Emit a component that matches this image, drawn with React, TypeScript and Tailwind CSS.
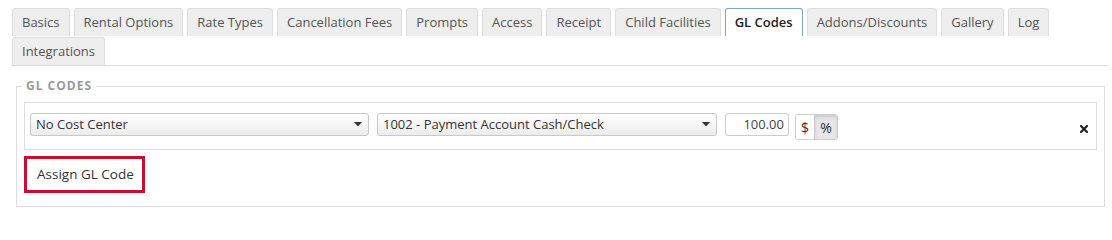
const tabs = [
  'Basics',
  'Rental Options',
  'Rate Types',
  'Cancellation Fees',
  'Prompts',
  'Access',
  'Receipt',
  'Child Facilities',
  'GL Codes',
  'Addons/Discounts',
  'Gallery',
  'Log',
  'Integrations',
];

function Caret() {
  return (
    <svg width="8" height="5" viewBox="0 0 8 5" className="shrink-0">
      <path d="M0 0h8L4 4.5z" fill="#333" />
    </svg>
  );
}

function FakeSelect({ label, width }: { label: string; width: string }) {
  return (
    <div className={`${width} h-[23px] flex items-center justify-between pl-[5px] pr-[6px] rounded-[3px] border border-[#c9c9c9] bg-linear-to-b from-white to-[#ececec] text-[13px] text-[#333]`}>
      <span className="truncate">{label}</span>
      <Caret />
    </div>
  );
}

export default function App() {
  const active = 'GL Codes';

  return (
    <div className="pt-2 pl-[11px] pr-[4px] bg-white font-['Open_Sans',sans-serif] text-[#333]">
      <ul className="flex flex-wrap gap-y-px border-b border-[#ddd] pl-[1px]">
        {tabs.map((t) => (
          <li key={t} className="mr-[4px]">
            <a
              className={
                t === active
                  ? 'h-[28px] flex items-center px-[9px] rounded-t-[3px] border border-b-0 border-[#7ea8cc] bg-white text-[13px] font-semibold text-[#222]'
                  : 'h-[28px] flex items-center px-[9px] rounded-t-[3px] border border-b-0 border-[#ddd] bg-[#eee] text-[13px] text-[#555]'
              }
            >
              {t}
            </a>
          </li>
        ))}
      </ul>

      <fieldset className="mt-[13px] ml-[5px] mr-[3px] border border-[#ddd] px-[7px] pb-[13px]">
        <legend className="-ml-[2px] px-1 text-[12px] leading-[14px] font-bold tracking-[1px] text-[#9a9a9a]">GL CODES</legend>

        <div className="mt-[9px] border border-[#ddd] pl-[5px] pr-[8px] pt-[10px] pb-[9px] flex items-start">
          <FakeSelect label="No Cost Center" width="w-[339px]" />
          <div className="ml-[8px]">
            <FakeSelect label="1002 - Payment Account Cash/Check" width="w-[340px]" />
          </div>
          <div className="ml-[8px] w-[64px] h-[23px] flex items-center justify-end pr-[4px] rounded-[3px] border border-[#ccc] bg-white text-[13px] text-[#444]">
            100.00
          </div>
          <div className="ml-[6px] mt-[1px] flex h-[26px] rounded-[3px] border border-[#ccc] overflow-hidden text-[14px] text-[#333]">
            <span className="w-[18px] flex items-center justify-center bg-white">$</span>
            <span className="w-[23px] flex items-center justify-center border-l border-[#ccc] bg-[#e6e6e6] shadow-[inset_0_2px_3px_rgba(0,0,0,0.12)]">%</span>
          </div>
          <button className="ml-auto mt-[12px] flex items-center" aria-label="remove">
            <svg width="8" height="8" viewBox="0 0 8 8">
              <path d="M1 1l6 6M7 1L1 7" stroke="#222" strokeWidth="2.2" strokeLinecap="square" />
            </svg>
          </button>
        </div>

        <button className="mt-[6px] h-[37px] w-[121px] flex items-center pl-[10px] border-[3px] border-[#c8102e] bg-white text-[13.5px] text-[#333]">
          Assign GL Code
        </button>
      </fieldset>
    </div>
  );
}
